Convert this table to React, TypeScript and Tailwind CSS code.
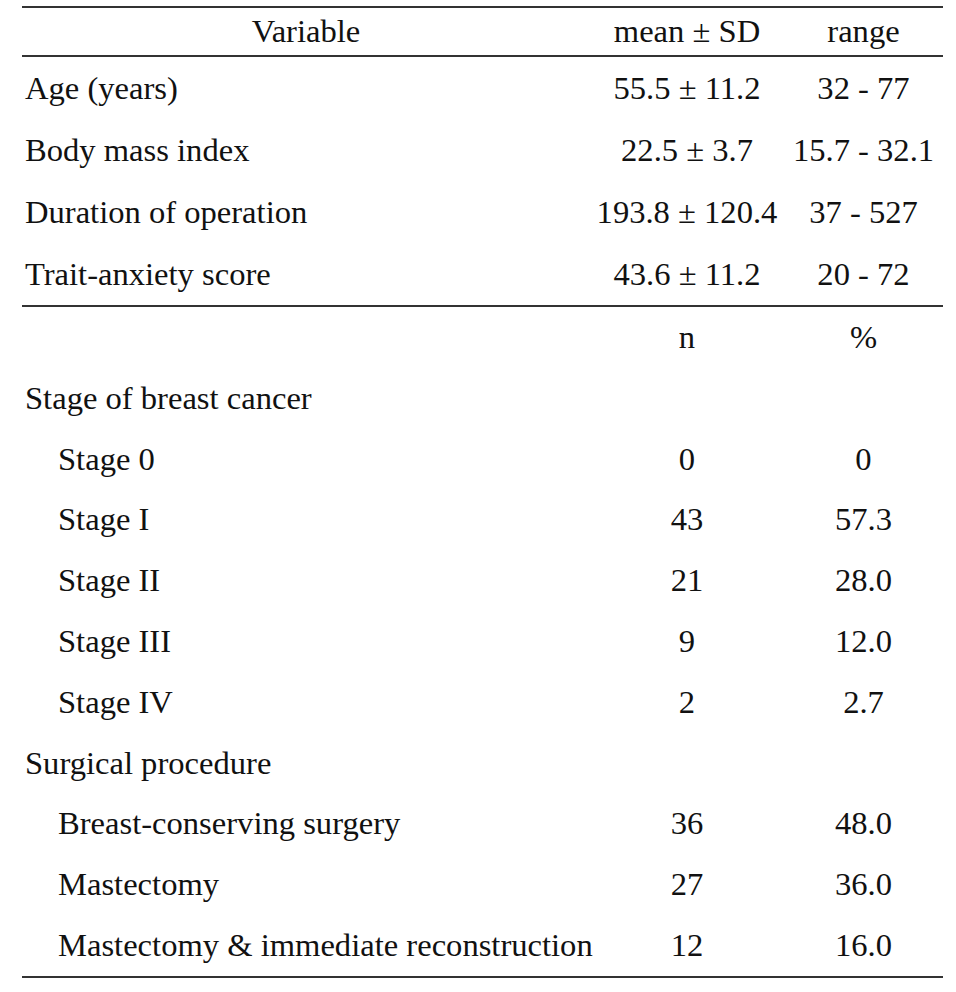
import React from 'react';

type Row = { label: string; a: string; b: string; indent?: boolean };

const continuous: Row[] = [
  { label: 'Age (years)', a: '55.5 ± 11.2', b: '32 - 77' },
  { label: 'Body mass index', a: '22.5 ± 3.7', b: '15.7 - 32.1' },
  { label: 'Duration of operation', a: '193.8 ± 120.4', b: '37 - 527' },
  { label: 'Trait-anxiety score', a: '43.6 ± 11.2', b: '20 - 72' },
];

const categorical: Row[] = [
  { label: '', a: 'n', b: '%' },
  { label: 'Stage of breast cancer', a: '', b: '' },
  { label: 'Stage 0', a: '0', b: '0', indent: true },
  { label: 'Stage I', a: '43', b: '57.3', indent: true },
  { label: 'Stage II', a: '21', b: '28.0', indent: true },
  { label: 'Stage III', a: '9', b: '12.0', indent: true },
  { label: 'Stage IV', a: '2', b: '2.7', indent: true },
  { label: 'Surgical procedure', a: '', b: '' },
  { label: 'Breast-conserving surgery', a: '36', b: '48.0', indent: true },
  { label: 'Mastectomy', a: '27', b: '36.0', indent: true },
  { label: 'Mastectomy & immediate reconstruction', a: '12', b: '16.0', indent: true },
];

const TableRow: React.FC<{ row: Row; tall?: boolean }> = ({ row, tall }) => (
  <div className={`grid grid-cols-[568px_194px_159px] items-center ${tall ? 'h-[62px]' : 'h-[60.8px]'}`}>
    <div className={`whitespace-nowrap ${row.indent ? 'pl-[36px]' : 'pl-[3px]'}`}>{row.label}</div>
    <div className="text-center whitespace-nowrap">{row.a}</div>
    <div className="text-center whitespace-nowrap">{row.b}</div>
  </div>
);

export default function App() {
  return (
    <div
      className="w-[956px] h-[992px] bg-white pt-[6px] pl-[22px] text-[32.6px] leading-none text-[#111]"
      style={{ fontFamily: "'Liberation Serif', 'Times New Roman', serif" }}
    >
      <div className="w-[921px] border-t-2 border-b-2 border-[#333]">
        {/* header */}
        <div className="grid grid-cols-[568px_194px_159px] items-center h-[49px] border-b-2 border-[#333]">
          <div className="text-center">Variable</div>
          <div className="text-center whitespace-nowrap">mean ± SD</div>
          <div className="text-center">range</div>
        </div>

        {/* continuous variables */}
        <div className="border-b-2 border-[#333]">
          {continuous.map((r) => (
            <TableRow key={r.label} row={r} tall />
          ))}
        </div>

        {/* categorical variables */}
        {categorical.map((r, i) => (
          <TableRow key={i} row={r} />
        ))}
      </div>
    </div>
  );
}
